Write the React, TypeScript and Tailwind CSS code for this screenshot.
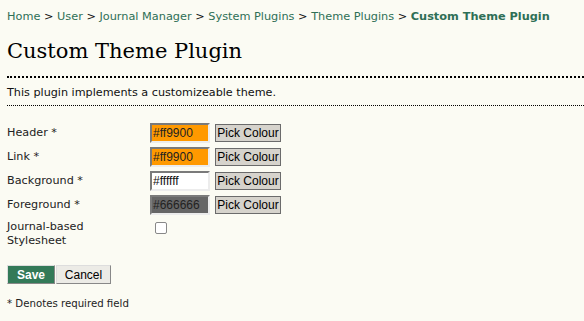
import React from "react";

const Row = ({ label, value, bg, fg }: { label: string; value: string; bg: string; fg: string }) => (
  <div className="flex h-[24px] items-start">
    <div className="w-[143px] pt-[3px] text-[11.2px] leading-[14px] text-[#222]">{label}</div>
    <div className="flex items-start gap-[5px]">
      <div
        className="h-[20px] w-[60px] border-2 border-t-[#7a7a7a] border-l-[#7a7a7a] border-b-[#ececec] border-r-[#ececec] px-[1px] text-[12px] leading-[16px]"
        style={{ background: bg, color: fg, fontFamily: '"Liberation Sans", Arial, sans-serif' }}
      >
        {value}
      </div>
      <button
        className="mt-[1px] h-[18px] w-[66px] border border-[#6b6b6b] bg-[#d6d3cc] text-[12px] leading-[15px] text-black"
        style={{ fontFamily: '"Liberation Sans", Arial, sans-serif' }}
      >
        Pick Colour
      </button>
    </div>
  </div>
);

export default function App() {
  return (
    <div
      className="min-h-[321px] w-[584px] overflow-hidden bg-[#fbfbf3] pl-[7px] text-[#111]"
      style={{ fontFamily: '"DejaVu Sans", Verdana, sans-serif' }}
    >
      <div className="pt-[10px] text-[11.3px] leading-[13px] text-[#2e6f56]">
        <span>Home</span> <span className="text-[#111]">&gt;</span> <span>User</span>{" "}
        <span className="text-[#111]">&gt;</span> <span>Journal Manager</span>{" "}
        <span className="text-[#111]">&gt;</span> <span>System Plugins</span>{" "}
        <span className="text-[#111]">&gt;</span> <span>Theme Plugins</span>{" "}
        <span className="text-[#111]">&gt;</span> <span className="font-bold">Custom Theme Plugin</span>
      </div>
      <h2
        className="mt-[14px] text-[21px] leading-[28px] text-black"
        style={{ fontFamily: '"DejaVu Serif", Georgia, serif' }}
      >
        Custom Theme Plugin
      </h2>
      <div className="mt-[11px] border-t-2 border-dotted border-black" />
      <p className="pt-[8px] pb-[5px] text-[11.2px] leading-[14px] text-[#111]">
        This plugin implements a customizeable theme.
      </p>
      <div className="border-t border-dotted border-black" />
      <div className="mt-[17px]">
        <Row label="Header *" value="#ff9900" bg="#ff9900" fg="#222" />
        <Row label="Link *" value="#ff9900" bg="#ff9900" fg="#222" />
        <Row label="Background *" value="#ffffff" bg="#ffffff" fg="#111" />
        <Row label="Foreground *" value="#666666" bg="#666666" fg="#222" />
        <div className="flex items-start">
          <div className="w-[143px] pt-[1px] text-[11.2px] leading-[14px] text-[#222]">
            Journal-based
            <br />
            Stylesheet
          </div>
          <div className="pl-[5px] pt-[3px]">
            <div className="h-[12px] w-[12px] rounded-[2px] border border-[#888] bg-white" />
          </div>
        </div>
      </div>
      <div className="mt-[17px] flex gap-[1px]">
        <button
          className="h-[19px] w-[48px] border border-t-[#ddd] border-l-[#ddd] border-b-[#888] border-r-[#888] bg-[#337a58] text-[12px] font-bold leading-[16px] text-white"
          style={{ fontFamily: '"Liberation Sans", Arial, sans-serif' }}
        >
          Save
        </button>
        <button
          className="h-[19px] w-[55px] border border-t-[#ddd] border-l-[#ddd] border-b-[#888] border-r-[#888] bg-[#ecebe6] text-[12px] leading-[16px] text-black"
          style={{ fontFamily: '"Liberation Sans", Arial, sans-serif' }}
        >
          Cancel
        </button>
      </div>
      <p className="mt-[14px] text-[10.2px] leading-[12px] text-[#222]">* Denotes required field</p>
    </div>
  );
}
